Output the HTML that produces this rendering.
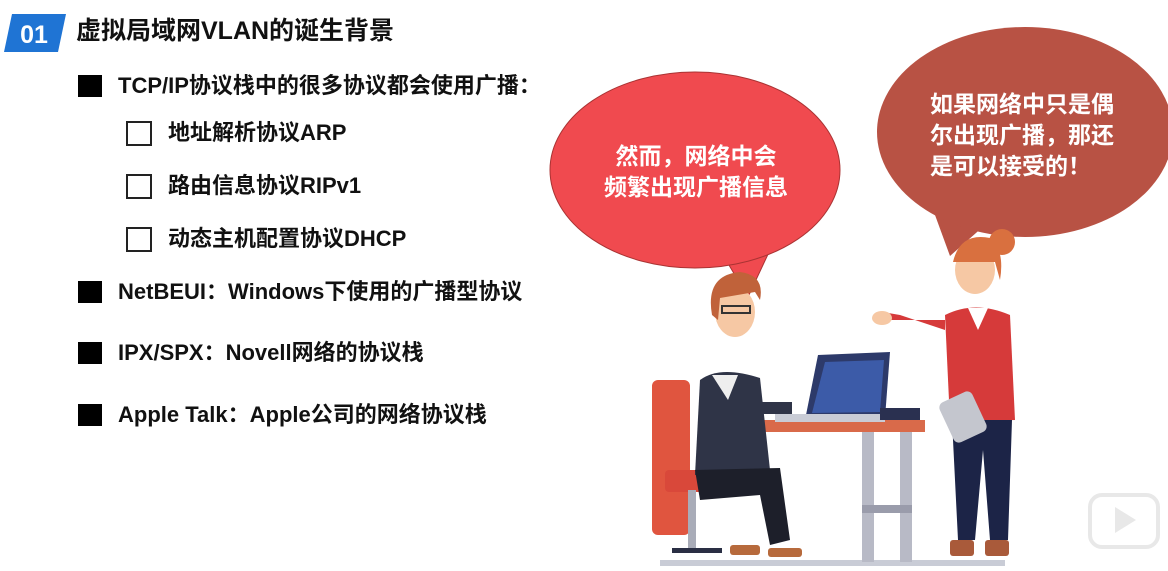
<!DOCTYPE html>
<html><head><meta charset="utf-8"><style>
body{margin:0;width:1168px;height:571px;background:#fff;position:relative;overflow:hidden;font-family:"Liberation Sans","Noto Sans CJK SC",sans-serif;}
.t{position:absolute;font-weight:bold;color:#111;white-space:nowrap;line-height:1;font-size:22px;}
.sq{position:absolute;width:24px;height:22px;background:#000;}
.cb{position:absolute;width:22px;height:21px;border:2px solid #222;background:#fff;}
</style></head><body>
<svg style="position:absolute;left:0;top:0" width="1168" height="571">
<polygon points="12,14 66,14 58,52 4,52" fill="#1f74d4"/>
<text x="34" y="43" fill="#fff" font-size="25" font-weight="bold" text-anchor="middle" font-family="Liberation Sans">01</text>
<polygon points="720,250 770,250 748,297" fill="#f04a4f" stroke="#a33" stroke-width="1"/>
<ellipse cx="695" cy="170" rx="145" ry="98" fill="#f04a4f" stroke="#a33" stroke-width="1"/>
<polygon points="935,215 985,225 950,256" fill="#b85244"/>
<ellipse cx="1025" cy="132" rx="148" ry="105" fill="#b85244"/>
<text fill="#fff" font-size="23" font-weight="bold" text-anchor="middle" font-family="Liberation Sans,Noto Sans CJK SC,sans-serif"><tspan x="696" y="164">然而，网络中会</tspan><tspan x="696" y="195">频繁出现广播信息</tspan></text>
<text fill="#fff" font-size="23" font-weight="bold" font-family="Liberation Sans,Noto Sans CJK SC,sans-serif"><tspan x="930" y="112">如果网络中只是偶</tspan><tspan x="930" y="143">尔出现广播，那还</tspan><tspan x="930" y="174">是可以接受的！</tspan></text>
<rect x="660" y="560" width="345" height="6" fill="#c9ccd6"/>
<rect x="652" y="380" width="38" height="155" rx="6" fill="#e0553f"/>
<rect x="665" y="470" width="90" height="22" rx="4" fill="#d9483a"/>
<rect x="688" y="490" width="8" height="60" fill="#a9acb8"/>
<rect x="672" y="548" width="50" height="5" fill="#2a2f44"/>
<rect x="745" y="420" width="180" height="12" fill="#d96a4a"/>
<rect x="862" y="432" width="12" height="130" fill="#b8bac6"/>
<rect x="900" y="432" width="12" height="130" fill="#b8bac6"/>
<rect x="862" y="505" width="50" height="8" fill="#9a9cab"/>
<polygon points="818,355 890,352 885,418 805,420" fill="#2d3a6a"/>
<polygon points="825,362 884,360 880,412 812,413" fill="#3c5ba8"/>
<rect x="775" y="414" width="110" height="8" fill="#c9ccd6"/>
<rect x="880" y="408" width="40" height="12" fill="#2a3050"/>
<path d="M700,380 Q720,365 760,378 L770,470 L695,475 Z" fill="#2f3447"/>
<polygon points="712,375 738,375 728,400" fill="#eeeeee"/>
<path d="M695,470 L780,468 L790,540 L770,545 L760,495 L700,500 Z" fill="#1d1f2a"/>
<rect x="730" y="545" width="30" height="10" rx="3" fill="#b76a3c"/>
<rect x="768" y="548" width="34" height="9" rx="3" fill="#b76a3c"/>
<rect x="752" y="402" width="40" height="12" fill="#2f3447"/>
<ellipse cx="735" cy="312" rx="20" ry="25" fill="#f6c8a4"/>
<path d="M712,315 Q705,275 740,272 Q765,275 760,300 L755,292 L720,298 L718,320 Z" fill="#c0623a"/>
<rect x="722" y="306" width="28" height="7" fill="none" stroke="#333" stroke-width="2"/>
<circle cx="1002" cy="242" r="13" fill="#d9703f"/>
<ellipse cx="975" cy="270" rx="20" ry="24" fill="#f6c8a4"/>
<path d="M953,262 Q960,232 990,238 Q1005,250 1000,280 L995,262 L960,262 Z" fill="#d9703f"/>
<path d="M945,315 Q975,300 1010,315 L1015,420 L950,422 Z" fill="#d63a3a"/>
<polygon points="968,308 988,308 978,330" fill="#fff"/>
<path d="M945,320 L885,320 L882,312 L900,315 L945,330 Z" fill="#d63a3a"/>
<ellipse cx="882" cy="318" rx="10" ry="7" fill="#f6c8a4"/>
<path d="M952,420 L1012,420 L1008,540 L990,540 L983,450 L975,540 L958,540 Z" fill="#1c2447"/>
<rect x="950" y="540" width="24" height="16" rx="3" fill="#a95a3a"/>
<rect x="985" y="540" width="24" height="16" rx="3" fill="#a95a3a"/>
<rect x="945" y="395" width="36" height="44" rx="6" fill="#c4c6ce" transform="rotate(-25 963 417)"/>
<rect x="1090" y="495" width="68" height="52" rx="12" fill="none" stroke="#e8e8e8" stroke-width="4"/>
<polygon points="1115,507 1115,533 1136,520" fill="#e8e8e8"/>
</svg>
<div class="t" style="left:76px;top:19px;font-size:25px;">虚拟局域网VLAN的诞生背景</div>
<div class="sq" style="left:78px;top:75px"></div>
<div class="t" style="left:118px;top:75px;">TCP/IP协议栈中的很多协议都会使用广播：</div>
<div class="cb" style="left:126px;top:121px"></div>
<div class="t" style="left:168px;top:122px;">地址解析协议ARP</div>
<div class="cb" style="left:126px;top:174px"></div>
<div class="t" style="left:168px;top:175px;">路由信息协议RIPv1</div>
<div class="cb" style="left:126px;top:227px"></div>
<div class="t" style="left:168px;top:228px;">动态主机配置协议DHCP</div>
<div class="sq" style="left:78px;top:281px"></div>
<div class="t" style="left:118px;top:281px;">NetBEUI：Windows下使用的广播型协议</div>
<div class="sq" style="left:78px;top:342px"></div>
<div class="t" style="left:118px;top:342px;">IPX/SPX：Novell网络的协议栈</div>
<div class="sq" style="left:78px;top:404px"></div>
<div class="t" style="left:118px;top:404px;">Apple Talk：Apple公司的网络协议栈</div>
</body></html>
